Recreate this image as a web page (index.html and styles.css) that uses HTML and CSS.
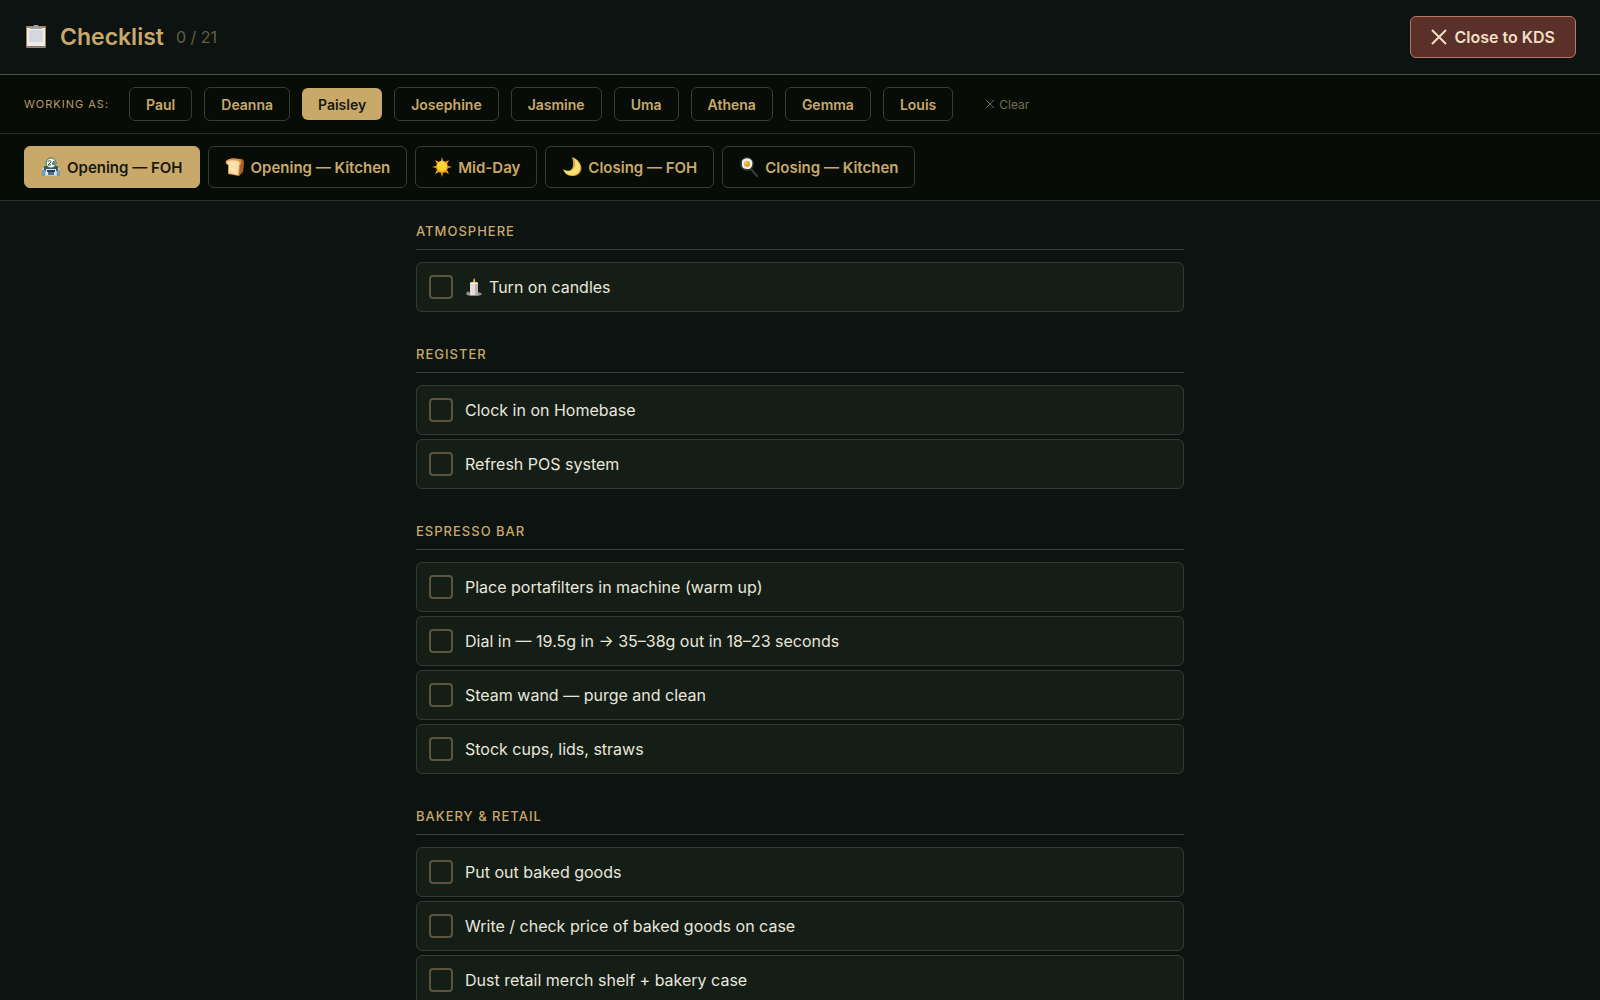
FILE: index.html
```html
<!DOCTYPE html>
<html lang="en">
<head>
    <meta charset="UTF-8">
    <meta name="viewport" content="width=device-width, initial-scale=1.0">
    <title>Checklist</title>
    <link rel="stylesheet" href="styles.css">
</head>
<body>
    <header class="topbar">
        <h1 class="title">
            <svg class="title-icon" viewBox="0 0 24 26" aria-hidden="true">
                <rect x="2" y="2" width="20" height="22" rx="1" fill="#a98255"/>
                <rect x="3" y="4" width="18" height="18" fill="#eceded"/>
                <rect x="5" y="6" width="14" height="12" fill="#d6d7da"/>
                <path d="M3 22h18v1H3z" fill="#777"/>
                <path d="M6 5V3h3l1-2h4l1 2h3v2z" fill="#9ba0a3"/>
            </svg>
            Checklist
        </h1>
        <span class="count">0 / 21</span>
        <button class="close-btn" type="button">
            <svg class="close-icon" viewBox="0 0 16 16" aria-hidden="true"><path d="M1 1l14 14M15 1L1 15"/></svg>
            Close to KDS
        </button>
    </header>

    <div class="workers">
        <span class="workers-label">Working as:</span>
        <button class="worker" type="button">Paul</button>
        <button class="worker" type="button">Deanna</button>
        <button class="worker active" type="button">Paisley</button>
        <button class="worker" type="button">Josephine</button>
        <button class="worker" type="button">Jasmine</button>
        <button class="worker" type="button">Uma</button>
        <button class="worker" type="button">Athena</button>
        <button class="worker" type="button">Gemma</button>
        <button class="worker" type="button">Louis</button>
        <button class="clear-btn" type="button">
            <svg class="clear-icon" viewBox="0 0 10 10" aria-hidden="true"><path d="M1 1l8 8M9 1l-8 8"/></svg>
            Clear
        </button>
    </div>

    <nav class="tabs">
        <button class="tab active" type="button">
            <svg class="emoji" viewBox="0 0 20 20" aria-hidden="true">
                <path d="M1 11h18v8H1z" fill="#b9cbd0"/>
                <path d="M3 9h14v5H3z" fill="#315d68"/>
                <path d="M1 13h3v6H1zM16 13h3v6h-3z" fill="#7899b0"/>
                <path d="M5 12h10v6H5z" fill="#e1eaf0"/>
                <path d="M6 13h8v2H6z" fill="#243d55"/>
                <path d="M7 15h6v3H7z" fill="#526f8c"/>
                <circle cx="10" cy="6" r="5" fill="#f4f8ef" stroke="#347653"/>
                <path d="M7 5c0-2 3-2 3 0L7 8h3M13 8V4l-2 3h3" fill="none" stroke="#365846"/>
            </svg>
            Opening — FOH
        </button>
        <button class="tab" type="button">
            <svg class="emoji" viewBox="0 0 20 20" aria-hidden="true">
                <path d="M5 2h9c4-1 5 2 5 4l-1 9-4 4-3-2z" fill="#a9612b"/>
                <path d="M2 3c3-2 8-2 12-1 3 1 3 4 1 6l-1 11-11-2V8C0 7 0 4 2 3z" fill="#d99748"/>
                <path d="M3 4c3-1 7-1 10 0 2 1 2 3 1 4l-1 10-9-2V8C2 7 1 5 3 4z" fill="#f8dfaa"/>
                <path d="M5 6l5 1M6 11l4 3" stroke="#fff0cb"/>
            </svg>
            Opening — Kitchen
        </button>
        <button class="tab" type="button">
            <svg class="emoji" viewBox="0 0 20 20" aria-hidden="true">
                <path d="M10 0l1 4H9zM10 20l1-4H9zM0 10l4-1v2zM20 10l-4-1v2zM3 3l4 2-2 2zM17 3l-2 4-2-2zM3 17l2-4 2 2zM17 17l-4-2 2-2z" fill="#f5a51d"/>
                <circle cx="10" cy="10" r="6" fill="#f7a51b"/>
                <circle cx="10" cy="9" r="5" fill="#ffd338"/>
            </svg>
            Mid-Day
        </button>
        <button class="tab" type="button">
            <svg class="emoji" viewBox="0 0 20 20" aria-hidden="true">
                <path d="M10 0c13 5 12 19 0 19-5 0-8-3-9-7 5 4 13 2 9-12z" fill="#dca837"/>
                <path d="M12 1c9 5 8 17-2 17-4 0-7-2-8-5 7 3 14-1 10-12z" fill="#f9df76"/>
            </svg>
            Closing — FOH
        </button>
        <button class="tab" type="button">
            <svg class="emoji" viewBox="0 0 20 20" aria-hidden="true">
                <path d="M12 12l6 7" stroke="#3c3c41" stroke-width="2" stroke-linecap="round"/>
                <circle cx="8" cy="7" r="7" fill="#303436"/>
                <path d="M3 4c2-3 7-4 10 0 1 3 0 7-3 8-3 0-6 0-7-3z" fill="#eef0ed"/>
                <circle cx="8" cy="7" r="3" fill="#e1a52e"/>
                <circle cx="7" cy="6" r="1" fill="#f9d86d"/>
            </svg>
            Closing — Kitchen
        </button>
    </nav>

    <main class="checklist">
        <section class="group">
            <h2 class="group-title">Atmosphere</h2>
            <label class="item">
                <input class="check" type="checkbox">
                <svg class="candle" viewBox="0 0 18 20" aria-hidden="true">
                    <ellipse cx="9" cy="17" rx="8" ry="2" fill="#8d8d8f"/>
                    <circle cx="3" cy="16" r="1" fill="#272a29" stroke="#aaa"/>
                    <path d="M5 6h8v12H5z" fill="#e7ddd8"/>
                    <path d="M10 6h3v12h-3z" fill="#c4b4b1"/>
                    <ellipse cx="9" cy="6" rx="4" ry="1" fill="#fff3df"/>
                    <path d="M9 1c2 2 1 5 0 5s-1-3 0-5z" fill="#efbd35"/>
                </svg>
                <span>Turn on candles</span>
            </label>
        </section>
        <section class="group">
            <h2 class="group-title">Register</h2>
            <label class="item"><input class="check" type="checkbox"><span>Clock in on Homebase</span></label>
            <label class="item"><input class="check" type="checkbox"><span>Refresh POS system</span></label>
        </section>
        <section class="group">
            <h2 class="group-title">Espresso Bar</h2>
            <label class="item"><input class="check" type="checkbox"><span>Place portafilters in machine (warm up)</span></label>
            <label class="item"><input class="check" type="checkbox"><span>Dial in — 19.5g in → 35–38g out in 18–23 seconds</span></label>
            <label class="item"><input class="check" type="checkbox"><span>Steam wand — purge and clean</span></label>
            <label class="item"><input class="check" type="checkbox"><span>Stock cups, lids, straws</span></label>
        </section>
        <section class="group">
            <h2 class="group-title">Bakery &amp; Retail</h2>
            <label class="item"><input class="check" type="checkbox"><span>Put out baked goods</span></label>
            <label class="item"><input class="check" type="checkbox"><span>Write / check price of baked goods on case</span></label>
            <label class="item"><input class="check" type="checkbox"><span>Dust retail merch shelf + bakery case</span></label>
        </section>
    </main>
</body>
</html>
```
FILE: styles.css
```css
* {
    box-sizing: border-box;
}
body {
    display: flex;
    flex-direction: column;
    height: 100vh;
    margin: 0;
    overflow: hidden;
    background-color: #0c1310;
    color: #e8e6dc;
    font-family: Inter, "Liberation Sans", sans-serif;
    font-size: 16px;
    line-height: 24px;
}
button {
    font-family: inherit;
    cursor: pointer;
}

.topbar {
    display: flex;
    flex-shrink: 0;
    align-items: center;
    gap: 12px;
    padding: 16px 24px;
    border-bottom: 1px solid #48524b;
}
.title {
    display: flex;
    align-items: center;
    gap: 12px;
    margin: 0;
    color: #c9a96a;
    font-size: 23px;
    font-weight: 600;
}
.title-icon {
    width: 24px;
    height: 26px;
}
.count {
    color: #655e45;
}
.close-btn {
    display: flex;
    align-items: center;
    gap: 8px;
    height: 42px;
    margin-left: auto;
    padding: 0 20px;
    background-color: #5a3028;
    border: 1px solid #b9776a;
    border-radius: 6px;
    color: #f1dfc6;
    font-size: 16px;
    font-weight: 600;
}
.close-icon {
    width: 16px;
    height: 16px;
    fill: none;
    stroke: currentColor;
    stroke-width: 2;
}

.workers {
    display: flex;
    flex-shrink: 0;
    align-items: center;
    gap: 12px;
    padding: 12px 24px;
    background-color: #070c07;
    border-bottom: 1px solid #27302a;
}
.workers-label {
    margin-right: 8px;
    color: #b69b62;
    font-size: 11px;
    letter-spacing: 1px;
    text-transform: uppercase;
}
.worker {
    height: 34px;
    padding: 0 16px;
    background-color: transparent;
    border: 1px solid #343d36;
    border-radius: 6px;
    color: #c9a96a;
    font-size: 14px;
    font-weight: 600;
}
.worker.active {
    height: 32px;
    background-color: #c9a96a;
    border: none;
    color: #17190f;
}
.clear-btn {
    display: flex;
    align-items: center;
    gap: 4px;
    padding: 0 20px;
    background-color: transparent;
    border: none;
    color: #766d50;
    font-size: 12px;
}
.clear-icon {
    width: 10px;
    height: 10px;
    fill: none;
    stroke: currentColor;
}

.tabs {
    display: flex;
    flex-shrink: 0;
    gap: 8px;
    padding: 12px 24px;
    background-color: #070c07;
    border-bottom: 1px solid #27302a;
}
.tab {
    display: flex;
    align-items: center;
    gap: 6px;
    height: 42px;
    padding: 0 16px;
    background-color: transparent;
    border: 1px solid #343d36;
    border-radius: 6px;
    color: #c9a96a;
    font-size: 15px;
    font-weight: 600;
}
.tab.active {
    background-color: #c9a96a;
    border-color: #c9a96a;
    color: #17190f;
}
.emoji {
    width: 20px;
    height: 20px;
}

.checklist {
    width: 100%;
    max-width: 800px;
    margin: 0 auto;
    padding: 20px 16px;
}
.group {
    display: flex;
    flex-direction: column;
    gap: 4px;
    margin-bottom: 32px;
}
.group-title {
    margin: 0 0 8px;
    padding-bottom: 8px;
    border-bottom: 1px solid #39413b;
    color: #c9a96a;
    font-size: 13px;
    font-weight: 500;
    line-height: 20px;
    letter-spacing: 1px;
    text-transform: uppercase;
}
.item {
    display: flex;
    align-items: center;
    gap: 12px;
    padding: 12px;
    background-color: #151e16;
    border: 1px solid #313b33;
    border-radius: 6px;
    cursor: pointer;
}
.check {
    appearance: none;
    width: 24px;
    height: 24px;
    margin: 0;
    border: 2px solid #5a543f;
    border-radius: 4px;
}
.check:checked {
    background-color: #c9a96a;
}
.candle {
    width: 18px;
    height: 20px;
    margin-right: -6px;
}
```
